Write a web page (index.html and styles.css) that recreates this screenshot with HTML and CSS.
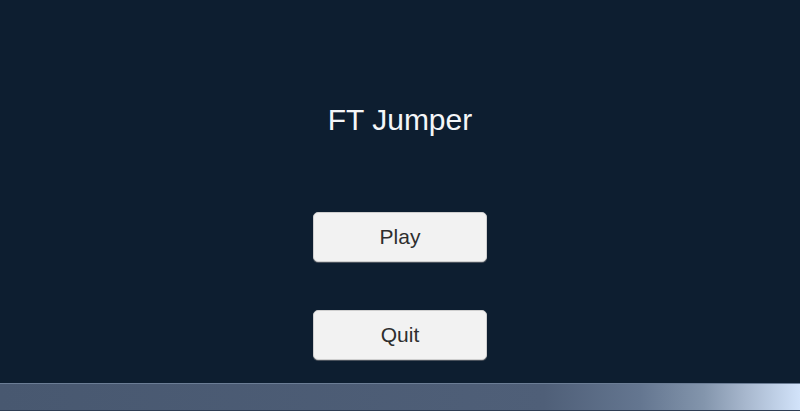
FILE: index.html
```html
<!DOCTYPE html>
<html lang="en">
<head>
  <meta charset="UTF-8" />
  <meta name="viewport" content="width=device-width, initial-scale=1.0" />
  <title>FT Jumper</title>
  <link rel="stylesheet" href="styles.css">
</head>
<body>
  <main class="menu">
    <h1 class="title">FT Jumper</h1>
    <div class="buttons">
      <button class="menu-btn">Play</button>
      <button class="menu-btn">Quit</button>
    </div>
  </main>
  <div class="bottom-bar"></div>
</body>
</html>
```

FILE: styles.css
```css
* {
  margin: 0;
  padding: 0;
  box-sizing: border-box;
}

html, body {
  height: 100%;
}

body {
  font-family: 'Liberation Sans', Arial, sans-serif;
  background: #0d1e30;
  display: flex;
  flex-direction: column;
  overflow: hidden;
}

.menu {
  flex: 1;
  display: flex;
  flex-direction: column;
  align-items: center;
  padding-top: 102px;
}

.title {
  font-size: 30px;
  font-weight: normal;
  line-height: 36px;
  color: #f4f6f8;
}

.buttons {
  display: flex;
  flex-direction: column;
  gap: 48px;
  margin-top: 74px;
}

.menu-btn {
  width: 174px;
  height: 50px;
  background: #f2f2f2;
  border: 1px solid #cfcfcf;
  border-radius: 5px;
  box-shadow: 0 1px 0 #4a525c;
  font-family: inherit;
  font-size: 21px;
  color: #2e2e2e;
}

.bottom-bar {
  height: 28px;
  border-top: 1px solid #6b7d95;
  border-bottom: 1px solid #2f3f55;
  background: linear-gradient(to right, #485870 0%, #4f5f78 68%, #647690 80%, #8395ac 88%, #a6b6cc 93%, #d2e3fa 100%);
}
```
